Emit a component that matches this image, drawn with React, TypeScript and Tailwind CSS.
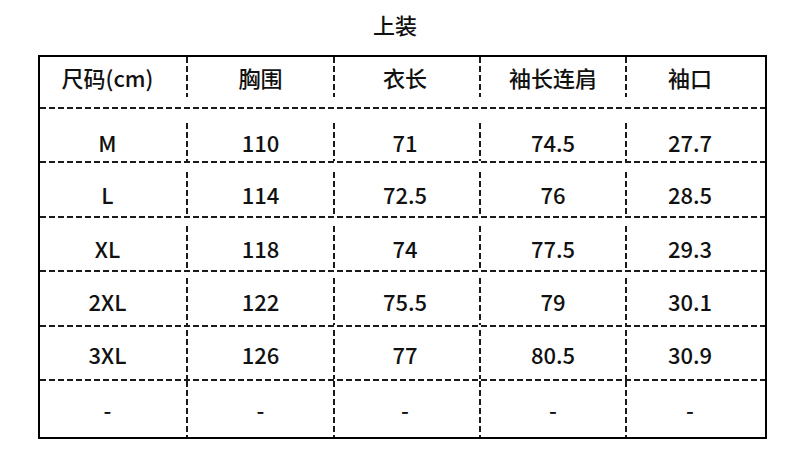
import React from 'react';

const headers = ['尺码(cm)', '胸围', '衣长', '袖长连肩', '袖口'];

const rows: string[][] = [
  ['M', '110', '71', '74.5', '27.7'],
  ['L', '114', '72.5', '76', '28.5'],
  ['XL', '118', '74', '77.5', '29.3'],
  ['2XL', '122', '75.5', '79', '30.1'],
  ['3XL', '126', '77', '80.5', '30.9'],
  ['-', '-', '-', '-', '-'],
];

// text sits a little low in the first rows of the source image
const rowShift = ['pt-[14px]', 'pt-[9px]', 'pt-[8px]', 'pt-[6px]', 'pt-[3px]', 'pt-0'];

const colWidths = [
  'w-[146px] pr-[11px]',
  'w-[145px]',
  'w-[144px] pr-[4px]',
  'w-[144px]',
  'flex-1 pr-[12px]',
];

const HDash = () => (
  <div className="h-[2px] w-full bg-[repeating-linear-gradient(to_right,#1a1a1a_0_6px,transparent_6px_9px)]" />
);

const VDash = () => (
  <div className="w-[2px] self-stretch bg-[repeating-linear-gradient(to_bottom,#1a1a1a_0_6px,transparent_6px_9px)]" />
);

const Row: React.FC<{ cells: string[]; className?: string }> = ({ cells, className = '' }) => (
  <div className={`flex ${className}`}>
    {cells.map((c, i) => (
      <React.Fragment key={i}>
        <div className={`${colWidths[i]} flex items-center justify-center`}>{c}</div>
        {i < cells.length - 1 && <VDash />}
      </React.Fragment>
    ))}
  </div>
);

export default function App() {
  return (
    <div
      className="w-[790px] h-[457px] bg-white text-[#111] font-medium"
      style={{ fontFamily: '"Noto Sans CJK SC", "Noto Sans", sans-serif' }}
    >
      <div className="h-[55px] flex items-center justify-center pb-[7px] text-[22px] leading-none">
        上装
      </div>
      <div className="ml-[38px] w-[729px] h-[384px] border-2 border-black flex flex-col text-[22px] leading-none">
        <Row cells={headers} className="h-[50px] pb-[10px]" />
        {rows.map((r, i) => (
          <React.Fragment key={i}>
            <HDash />
            <Row cells={r} className={`${i === rows.length - 1 ? 'flex-1' : 'h-[52.4px]'} ${rowShift[i]}`} />
          </React.Fragment>
        ))}
      </div>
    </div>
  );
}
